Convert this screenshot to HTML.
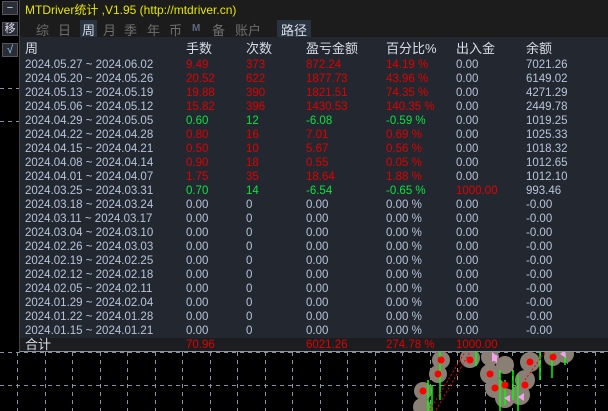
<!DOCTYPE html>
<html><head><meta charset="utf-8"><style>
body{margin:0;width:608px;height:411px;background:#000;overflow:hidden;position:relative;font-family:"Liberation Sans","Noto Sans CJK SC",sans-serif;}
.btn{position:absolute;left:2px;width:14px;height:12px;background:#2a2e34;border:1px solid #556;color:#dde;font-size:11px;line-height:12px;text-align:center;}
#panel{position:absolute;left:19px;top:0;width:589px;height:351px;background:#1c1c1c;border-bottom:1px solid #8a93a0;border-left:1px solid #444;}
#title{position:absolute;left:5px;top:1px;color:#e6e600;font-size:12px;}
.tab{position:absolute;top:20px;color:#6e6e6e;font-size:13px;}
#table{position:absolute;left:0;top:37px;width:589px;height:314px;background:#232830;}
.r{position:absolute;left:0;height:14px;width:589px;font-size:11.5px;line-height:14px;color:#b8c4da;white-space:nowrap}
.r span{position:absolute}
.c0{left:5px}.c1{left:166px}.c2{left:226px}.c3{left:286px}.c4{left:366px}.c5{left:436px}.c6{left:506px}
.red{color:#e00000}.grn{color:#10e040}
.hd{font-size:13px;color:#d8dde8}
</style></head><body>
<div class="btn" style="top:1px">−</div>
<div class="btn" style="top:22px">移</div>
<div class="btn" style="top:43px;color:#9cf">√</div>
<svg width="608" height="411" style="position:absolute;left:0;top:0">
<g stroke="#8a93a0" stroke-dasharray="4,4" stroke-width="1">
<line x1="0" y1="88.5" x2="19" y2="88.5"/><line x1="0" y1="121.5" x2="19" y2="121.5"/>
<line x1="0" y1="352.5" x2="608" y2="352.5"/><line x1="0" y1="385.5" x2="608" y2="385.5"/>
<line x1="17.5" y1="352" x2="17.5" y2="411"/><line x1="45.5" y1="352" x2="45.5" y2="411"/><line x1="72.5" y1="352" x2="72.5" y2="411"/><line x1="100.5" y1="352" x2="100.5" y2="411"/><line x1="127.5" y1="352" x2="127.5" y2="411"/><line x1="155.5" y1="352" x2="155.5" y2="411"/><line x1="182.5" y1="352" x2="182.5" y2="411"/><line x1="210.5" y1="352" x2="210.5" y2="411"/><line x1="237.5" y1="352" x2="237.5" y2="411"/><line x1="265.5" y1="352" x2="265.5" y2="411"/><line x1="292.5" y1="352" x2="292.5" y2="411"/><line x1="320.5" y1="352" x2="320.5" y2="411"/><line x1="347.5" y1="352" x2="347.5" y2="411"/><line x1="375.5" y1="352" x2="375.5" y2="411"/><line x1="402.5" y1="352" x2="402.5" y2="411"/><line x1="430.5" y1="352" x2="430.5" y2="411"/><line x1="457.5" y1="352" x2="457.5" y2="411"/><line x1="485.5" y1="352" x2="485.5" y2="411"/><line x1="512.5" y1="352" x2="512.5" y2="411"/><line x1="540.5" y1="352" x2="540.5" y2="411"/><line x1="567.5" y1="352" x2="567.5" y2="411"/><line x1="595.5" y1="352" x2="595.5" y2="411"/>
</g>
<g fill="#8a7f74">
<circle cx="441" cy="360" r="9"/><circle cx="438" cy="374" r="9"/><circle cx="423" cy="391" r="9"/><circle cx="422" cy="407" r="9"/>
<circle cx="470" cy="358" r="10"/><circle cx="490" cy="357" r="9"/><circle cx="490" cy="374" r="10"/><circle cx="495" cy="388" r="10"/><circle cx="505" cy="398" r="10"/><circle cx="520" cy="395" r="10"/><circle cx="525" cy="380" r="10"/><circle cx="530" cy="362" r="10"/><circle cx="553" cy="357" r="9"/><circle cx="565" cy="354" r="9"/><circle cx="505" cy="365" r="9"/>
</g>
<g stroke="#00ff00" stroke-width="1.5">
<line x1="428" y1="380" x2="428" y2="411"/><line x1="432" y1="385" x2="432" y2="411"/><line x1="440" y1="352" x2="440" y2="400"/><line x1="476" y1="352" x2="476" y2="366"/><line x1="500" y1="370" x2="500" y2="411"/><line x1="505" y1="380" x2="505" y2="405"/><line x1="513" y1="370" x2="513" y2="400"/><line x1="518" y1="375" x2="518" y2="411"/><line x1="540" y1="352" x2="540" y2="380"/><line x1="552" y1="352" x2="552" y2="378"/><line x1="565" y1="352" x2="565" y2="365"/>
</g>
<g stroke="#e00" stroke-width="1" stroke-dasharray="2,2"><line x1="430" y1="410" x2="465" y2="352"/><line x1="436" y1="410" x2="470" y2="352"/><line x1="525" y1="380" x2="545" y2="352"/></g>
<g fill="#f00"><circle cx="441" cy="360" r="3.5"/><circle cx="438" cy="374" r="3.5"/><circle cx="423" cy="391" r="3.5"/><circle cx="470" cy="360" r="3.5"/><circle cx="490" cy="374" r="3.5"/><circle cx="495" cy="388" r="3.5"/><circle cx="505" cy="385" r="3.5"/><circle cx="525" cy="385" r="3.5"/><circle cx="530" cy="362" r="3.5"/><circle cx="553" cy="357" r="3.5"/></g>
<g fill="#f8a0f0"><polygon points="492,352 498,357 492,362"/><polygon points="510,395 504,398 510,402"/><polygon points="524,393 518,397 524,401"/><polygon points="565,350 560,354 566,358"/><polygon points="497,355 492,359 497,363"/></g>
</svg>
<div id="panel">
<div id="title">MTDriver统计 ,V1.95 (http://mtdriver.cn)</div>
<span class="tab" style="left:16px">综</span><span class="tab" style="left:38px">日</span>
<span class="tab" style="left:60px;background:#2a3340;color:#d0d8e8;padding:0 2px">周</span>
<span class="tab" style="left:83px">月</span><span class="tab" style="left:104px">季</span><span class="tab" style="left:127px">年</span><span class="tab" style="left:149px">币</span><span class="tab" style="left:172px;font-size:10px;top:23px;color:#5c6a7c;font-weight:bold">M</span><span class="tab" style="left:192px">备</span><span class="tab" style="left:215px">账户</span>
<span class="tab" style="left:257px;background:#2a3340;color:#d8dde8;padding:0 4px">路径</span>
<div id="table">
<div class="r hd" style="top:5px"><span class="c0">周</span><span class="c1">手数</span><span class="c2">次数</span><span class="c3">盈亏金额</span><span class="c4">百分比%</span><span class="c5">出入金</span><span class="c6">余额</span></div>
<div class="r" style="top:21px"><span class="c0">2024.05.27 ~ 2024.06.02</span><span class="c1 red">9.49</span><span class="c2 red">373</span><span class="c3 red">872.24</span><span class="c4 red">14.19 %</span><span class="c5">0.00</span><span class="c6">7021.26</span></div>
<div class="r" style="top:35px"><span class="c0">2024.05.20 ~ 2024.05.26</span><span class="c1 red">20.52</span><span class="c2 red">622</span><span class="c3 red">1877.73</span><span class="c4 red">43.96 %</span><span class="c5">0.00</span><span class="c6">6149.02</span></div>
<div class="r" style="top:49px"><span class="c0">2024.05.13 ~ 2024.05.19</span><span class="c1 red">19.88</span><span class="c2 red">390</span><span class="c3 red">1821.51</span><span class="c4 red">74.35 %</span><span class="c5">0.00</span><span class="c6">4271.29</span></div>
<div class="r" style="top:63px"><span class="c0">2024.05.06 ~ 2024.05.12</span><span class="c1 red">15.82</span><span class="c2 red">396</span><span class="c3 red">1430.53</span><span class="c4 red">140.35 %</span><span class="c5">0.00</span><span class="c6">2449.78</span></div>
<div class="r" style="top:77px"><span class="c0">2024.04.29 ~ 2024.05.05</span><span class="c1 grn">0.60</span><span class="c2 grn">12</span><span class="c3 grn">-6.08</span><span class="c4 grn">-0.59 %</span><span class="c5">0.00</span><span class="c6">1019.25</span></div>
<div class="r" style="top:91px"><span class="c0">2024.04.22 ~ 2024.04.28</span><span class="c1 red">0.80</span><span class="c2 red">16</span><span class="c3 red">7.01</span><span class="c4 red">0.69 %</span><span class="c5">0.00</span><span class="c6">1025.33</span></div>
<div class="r" style="top:105px"><span class="c0">2024.04.15 ~ 2024.04.21</span><span class="c1 red">0.50</span><span class="c2 red">10</span><span class="c3 red">5.67</span><span class="c4 red">0.56 %</span><span class="c5">0.00</span><span class="c6">1018.32</span></div>
<div class="r" style="top:119px"><span class="c0">2024.04.08 ~ 2024.04.14</span><span class="c1 red">0.90</span><span class="c2 red">18</span><span class="c3 red">0.55</span><span class="c4 red">0.05 %</span><span class="c5">0.00</span><span class="c6">1012.65</span></div>
<div class="r" style="top:133px"><span class="c0">2024.04.01 ~ 2024.04.07</span><span class="c1 red">1.75</span><span class="c2 red">35</span><span class="c3 red">18.64</span><span class="c4 red">1.88 %</span><span class="c5">0.00</span><span class="c6">1012.10</span></div>
<div class="r" style="top:147px"><span class="c0">2024.03.25 ~ 2024.03.31</span><span class="c1 grn">0.70</span><span class="c2 grn">14</span><span class="c3 grn">-6.54</span><span class="c4 grn">-0.65 %</span><span class="c5 red">1000.00</span><span class="c6">993.46</span></div>
<div class="r" style="top:161px"><span class="c0">2024.03.18 ~ 2024.03.24</span><span class="c1">0.00</span><span class="c2">0</span><span class="c3">0.00</span><span class="c4">0.00 %</span><span class="c5">0.00</span><span class="c6">-0.00</span></div>
<div class="r" style="top:175px"><span class="c0">2024.03.11 ~ 2024.03.17</span><span class="c1">0.00</span><span class="c2">0</span><span class="c3">0.00</span><span class="c4">0.00 %</span><span class="c5">0.00</span><span class="c6">-0.00</span></div>
<div class="r" style="top:189px"><span class="c0">2024.03.04 ~ 2024.03.10</span><span class="c1">0.00</span><span class="c2">0</span><span class="c3">0.00</span><span class="c4">0.00 %</span><span class="c5">0.00</span><span class="c6">-0.00</span></div>
<div class="r" style="top:203px"><span class="c0">2024.02.26 ~ 2024.03.03</span><span class="c1">0.00</span><span class="c2">0</span><span class="c3">0.00</span><span class="c4">0.00 %</span><span class="c5">0.00</span><span class="c6">-0.00</span></div>
<div class="r" style="top:217px"><span class="c0">2024.02.19 ~ 2024.02.25</span><span class="c1">0.00</span><span class="c2">0</span><span class="c3">0.00</span><span class="c4">0.00 %</span><span class="c5">0.00</span><span class="c6">-0.00</span></div>
<div class="r" style="top:231px"><span class="c0">2024.02.12 ~ 2024.02.18</span><span class="c1">0.00</span><span class="c2">0</span><span class="c3">0.00</span><span class="c4">0.00 %</span><span class="c5">0.00</span><span class="c6">-0.00</span></div>
<div class="r" style="top:245px"><span class="c0">2024.02.05 ~ 2024.02.11</span><span class="c1">0.00</span><span class="c2">0</span><span class="c3">0.00</span><span class="c4">0.00 %</span><span class="c5">0.00</span><span class="c6">-0.00</span></div>
<div class="r" style="top:259px"><span class="c0">2024.01.29 ~ 2024.02.04</span><span class="c1">0.00</span><span class="c2">0</span><span class="c3">0.00</span><span class="c4">0.00 %</span><span class="c5">0.00</span><span class="c6">-0.00</span></div>
<div class="r" style="top:273px"><span class="c0">2024.01.22 ~ 2024.01.28</span><span class="c1">0.00</span><span class="c2">0</span><span class="c3">0.00</span><span class="c4">0.00 %</span><span class="c5">0.00</span><span class="c6">-0.00</span></div>
<div class="r" style="top:287px"><span class="c0">2024.01.15 ~ 2024.01.21</span><span class="c1">0.00</span><span class="c2">0</span><span class="c3">0.00</span><span class="c4">0.00 %</span><span class="c5">0.00</span><span class="c6">-0.00</span></div>
<div class="r" style="top:301px;height:13px;background:#1c1d20"><span class="c0 hd">合计</span><span class="c1 red">70.96</span><span class="c3 red">6021.26</span><span class="c4 red">274.78 %</span><span class="c5 red">1000.00</span></div>
</div>
</div>
</body></html>
